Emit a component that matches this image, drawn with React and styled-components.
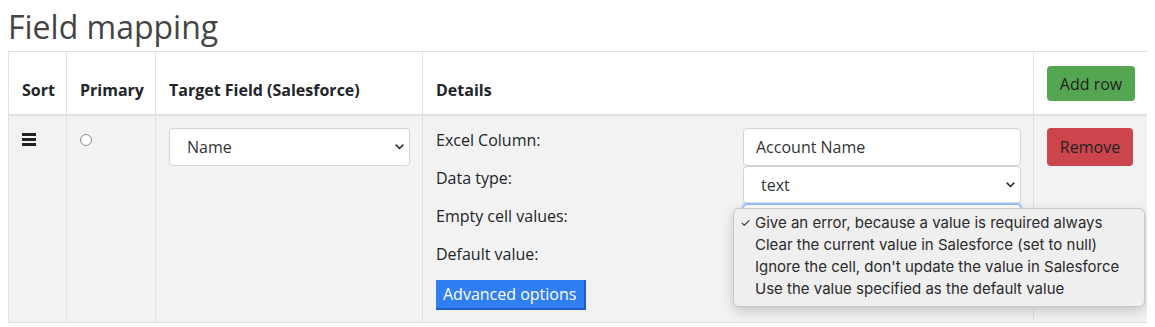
import React from "react";
import styled, { createGlobalStyle } from "styled-components";

const GlobalStyle = createGlobalStyle`
  body {
    margin: 8px;
    background: #fff;
    font-family: "Open Sans", "Liberation Sans", sans-serif;
    color: #212529;
  }
`;

const Title = styled.h1`
  font-size: 32px;
  font-weight: 400;
  color: #444;
  margin: 0 0 5px 0;
  line-height: 38px;
`;

const Table = styled.table`
  width: 1139px;
  border-collapse: collapse;
  font-size: 16px;
  table-layout: fixed;
`;

const Col = styled.col`
  width: ${(p) => p.$w}px;
`;

const Th = styled.th`
  text-align: left;
  vertical-align: bottom;
  padding: 14px 12px 12px 13px;
  border: 1px solid #dee2e6;
  border-bottom: 2px solid #dee2e6;
  font-weight: 700;
  line-height: 24px;
  color: #212529;
`;

const Row = styled.tr`
  background: #f2f2f2;
`;

const Td = styled.td`
  vertical-align: top;
  padding: 12px 12px 12px 13px;
  border: 1px solid #dee2e6;
  line-height: 24px;
  position: ${(p) => (p.$rel ? "relative" : "static")};
`;

const Handle = styled.div`
  display: flex;
  flex-direction: column;
  gap: 2px;
  width: 14px;
  padding-top: 5px;
  span {
    display: block;
    height: 3px;
    background: #222;
  }
`;

const Radio = styled.span`
  display: block;
  width: 10px;
  height: 10px;
  margin: 6px 0 0 0;
  border: 1px solid #8a8a8a;
  border-radius: 50%;
  background: #fff;
`;

const SelectBox = styled.div`
  box-sizing: border-box;
  height: 38px;
  min-width: 0;
  display: flex;
  align-items: center;
  justify-content: space-between;
  padding: 0 5px 0 17px;
  background: #fff;
  border: 1px solid ${(p) => (p.$focus ? "#86b7fe" : "#ced4da")};
  box-shadow: ${(p) => (p.$focus ? "0 0 0 2px rgba(13,110,253,0.2)" : "none")};
  border-radius: 4px;
  font-size: 16px;
  color: #333;
  overflow: hidden;
  white-space: nowrap;
`;

const TextInput = styled.div`
  box-sizing: border-box;
  height: 38px;
  display: flex;
  align-items: center;
  padding: 0 12px;
  background: #fff;
  border: 1px solid #ced4da;
  border-radius: 4px;
  font-size: 16px;
  color: #333;
`;

const DetailsGrid = styled.div`
  display: grid;
  grid-template-columns: minmax(0, 1fr) 278px;
  grid-auto-rows: 38px;
  column-gap: 10px;
`;

const Label = styled.div`
  font-size: 16px;
  line-height: 24px;
  color: #212529;
`;

const AdvancedButton = styled.button`
  display: block;
  font-family: "Open Sans", "Liberation Sans", sans-serif;
  font-size: 16px;
  color: #fff;
  background: #2f7ef2;
  border: none;
  border-right: 2px solid #1d5fc4;
  border-bottom: 2px solid #1d5fc4;
  padding: 0 7px;
  height: 30px;
  width: 150px;
  text-align: left;
  line-height: 28px;
`;

const ActionButton = styled.button`
  font-family: "Open Sans", "Liberation Sans", sans-serif;
  font-size: 16px;
  color: #222;
  background: ${(p) => (p.$variant === "add" ? "#55a650" : "#cd454c")};
  border: none;
  border-radius: 4px;
  height: ${(p) => (p.$variant === "add" ? 35 : 38)}px;
  width: ${(p) => (p.$variant === "add" ? 88 : 86)}px;
  padding: 0;
  display: block;
  margin-bottom: ${(p) => (p.$variant === "add" ? 1 : 0)}px;
`;

const Menu = styled.div`
  position: absolute;
  left: 310px;
  top: 92px;
  width: 412px;
  box-sizing: border-box;
  padding: 3px 0 6px 0;
  background: #efefef;
  border: 1px solid #c9c9c9;
  border-radius: 6px;
  box-shadow: 0 4px 12px rgba(0, 0, 0, 0.18);
  font-family: Inter, "Liberation Sans", sans-serif;
  font-size: 15px;
  color: #2a2a2a;
  z-index: 5;
`;

const MenuItem = styled.div`
  display: flex;
  align-items: center;
  height: 22px;
  padding-left: 21px;
  position: relative;
  white-space: nowrap;
`;

const Check = styled.span`
  position: absolute;
  left: 6px;
  font-size: 12px;
`;

const Chevron = () => (
  <svg width="9" height="6" viewBox="0 0 9 6">
    <path d="M1.2 1.2 L4.5 4.5 L7.8 1.2" fill="none" stroke="#333" strokeWidth="1.7" strokeLinecap="round" strokeLinejoin="round" />
  </svg>
);

const options = [
  "Give an error, because a value is required always",
  "Clear the current value in Salesforce (set to null)",
  "Ignore the cell, don't update the value in Salesforce",
  "Use the value specified as the default value",
];

export default function App() {
  return (
    <>
      <GlobalStyle />
      <Title>Field mapping</Title>
      <Table>
        <colgroup>
          <Col $w={58} />
          <Col $w={89} />
          <Col $w={267} />
          <Col $w={611} />
          <Col $w={114} />
        </colgroup>
        <thead>
          <tr>
            <Th>Sort</Th>
            <Th>Primary</Th>
            <Th>Target Field (Salesforce)</Th>
            <Th>Details</Th>
            <Th>
              <ActionButton $variant="add">Add row</ActionButton>
            </Th>
          </tr>
        </thead>
        <tbody>
          <Row>
            <Td>
              <Handle>
                <span />
                <span />
                <span />
              </Handle>
            </Td>
            <Td>
              <Radio />
            </Td>
            <Td>
              <SelectBox>
                Name
                <Chevron />
              </SelectBox>
            </Td>
            <Td $rel>
              <DetailsGrid>
                <Label>Excel Column:</Label>
                <TextInput>Account Name</TextInput>
                <Label>Data type:</Label>
                <SelectBox>
                  text
                  <Chevron />
                </SelectBox>
                <Label>Empty cell values:</Label>
                <SelectBox $focus />
                <Label>Default value:</Label>
                <TextInput />
              </DetailsGrid>
              <AdvancedButton>Advanced options</AdvancedButton>
              <Menu>
                {options.map((o, i) => (
                  <MenuItem key={o}>
                    {i === 0 && <Check>✓</Check>}
                    {o}
                  </MenuItem>
                ))}
              </Menu>
            </Td>
            <Td>
              <ActionButton $variant="remove">Remove</ActionButton>
            </Td>
          </Row>
        </tbody>
      </Table>
    </>
  );
}
